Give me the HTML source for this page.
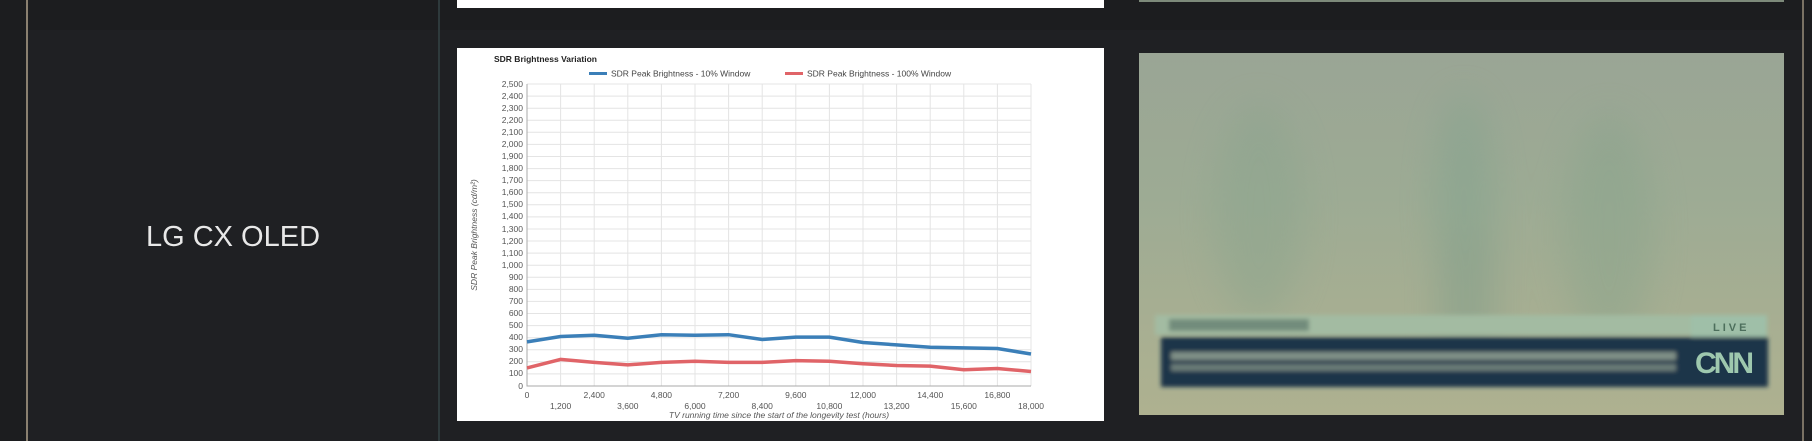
<!DOCTYPE html>
<html><head><meta charset="utf-8"><style>
html,body{margin:0;padding:0;width:1812px;height:441px;overflow:hidden;background:#1c1d1f;font-family:"Liberation Sans",Arial,sans-serif}
.abs{position:absolute}
</style></head><body>
<div class="abs" style="left:28px;top:30px;width:1775px;height:411px;background:#1f2023"></div>
<div class="abs" style="left:26px;top:0;width:2px;height:441px;background:#8a8070"></div>
<div class="abs" style="left:1802px;top:0;width:2px;height:441px;background:#7a7264"></div>
<div class="abs" style="left:438px;top:0;width:2px;height:441px;background:#2e3a3c"></div>
<div class="abs" style="left:1804px;top:0;width:8px;height:441px;background:#1c1d1f"></div>
<div class="abs" style="left:457px;top:0;width:647px;height:8px;background:#fff"></div>
<div class="abs" style="left:1139px;top:0;width:645px;height:2px;background:#7d8a7a"></div>
<div class="abs" style="left:28px;top:220px;width:410px;text-align:center;color:#e8e8e8;font-size:29px;line-height:34px">LG CX OLED</div>
<div class="abs" style="left:457px;top:48px;width:647px;height:373px;background:#fff">
<svg width="647" height="373" viewBox="0 0 647 373" font-family="Liberation Sans,Arial,sans-serif">
<g stroke="#e4e4e4" stroke-width="1">
<path d="M70 36H574M70 48.1H574M70 60.2H574M70 72.2H574M70 84.3H574M70 96.4H574M70 108.5H574M70 120.6H574M70 132.6H574M70 144.7H574M70 156.8H574M70 168.9H574M70 181H574M70 193H574M70 205.1H574M70 217.2H574M70 229.3H574M70 241.4H574M70 253.4H574M70 265.5H574M70 277.6H574M70 289.7H574M70 301.8H574M70 313.8H574M70 325.9H574"/>
<path d="M103.6 36V338M137.2 36V338M170.8 36V338M204.4 36V338M238 36V338M271.6 36V338M305.2 36V338M338.8 36V338M372.4 36V338M406 36V338M439.6 36V338M473.2 36V338M506.8 36V338M540.4 36V338M574 36V338"/>
</g>
<path d="M70 36V338H574" stroke="#aaa" fill="none"/>
<text x="37" y="14" font-size="8.5" font-weight="bold" fill="#222">SDR Brightness Variation</text>
<path d="M132 25.5h18" stroke="#3b7fb8" stroke-width="3"/>
<text x="154" y="28.5" font-size="8.5" fill="#444">SDR Peak Brightness - 10% Window</text>
<path d="M328 25.5h18" stroke="#e06468" stroke-width="3"/>
<text x="350" y="28.5" font-size="8.5" fill="#444">SDR Peak Brightness - 100% Window</text>
<g font-size="8.5" fill="#555" text-anchor="end">
<text x="66" y="39">2,500</text><text x="66" y="51">2,400</text><text x="66" y="63">2,300</text><text x="66" y="75">2,200</text><text x="66" y="87">2,100</text><text x="66" y="99">2,000</text><text x="66" y="111">1,900</text><text x="66" y="123">1,800</text><text x="66" y="135">1,700</text><text x="66" y="147">1,600</text><text x="66" y="159">1,500</text><text x="66" y="171">1,400</text><text x="66" y="184">1,300</text><text x="66" y="196">1,200</text><text x="66" y="208">1,100</text><text x="66" y="220">1,000</text><text x="66" y="232">900</text><text x="66" y="244">800</text><text x="66" y="256">700</text><text x="66" y="268">600</text><text x="66" y="280">500</text><text x="66" y="292">400</text><text x="66" y="304">300</text><text x="66" y="316">200</text><text x="66" y="328">100</text><text x="66" y="341">0</text>
</g>
<g font-size="8.5" fill="#555" text-anchor="middle">
<text x="70" y="350">0</text><text x="137.2" y="350">2,400</text><text x="204.4" y="350">4,800</text><text x="271.6" y="350">7,200</text><text x="338.8" y="350">9,600</text><text x="406" y="350">12,000</text><text x="473.2" y="350">14,400</text><text x="540.4" y="350">16,800</text>
<text x="103.6" y="361">1,200</text><text x="170.8" y="361">3,600</text><text x="238" y="361">6,000</text><text x="305.2" y="361">8,400</text><text x="372.4" y="361">10,800</text><text x="439.6" y="361">13,200</text><text x="506.8" y="361">15,600</text><text x="574" y="361">18,000</text>
<text x="322" y="370" font-style="italic">TV running time since the start of the longevity test (hours)</text>
<text transform="translate(20 187) rotate(-90)" font-style="italic">SDR Peak Brightness (cd/m²)</text>
</g>
<polyline fill="none" stroke="#3b7fb8" stroke-width="3.5" points="70,293.9 103.6,288.5 137.2,287.3 170.8,290.3 204.4,286.7 238,287.3 271.6,286.7 305.2,291.5 338.8,289.1 372.4,289.1 406,294.5 439.6,296.9 473.2,299.3 506.8,299.9 540.4,300.5 574,306"/>
<polyline fill="none" stroke="#e06468" stroke-width="3.5" points="70,319.9 103.6,311.4 137.2,314.4 170.8,316.9 204.4,314.4 238,313.2 271.6,314.4 305.2,314.4 338.8,312.6 372.4,313.2 406,315.7 439.6,317.5 473.2,318.1 506.8,321.7 540.4,320.5 574,323.5"/>
</svg></div>
<div class="abs" style="left:1139px;top:53px;width:645px;height:362px;overflow:hidden;background:linear-gradient(180deg,#9aa595 0%,#9dab94 40%,#a6ae92 70%,#aeb190 100%)">
<svg width="645" height="362">
<defs><filter id="b" x="-50%" y="-50%" width="200%" height="200%"><feGaussianBlur stdDeviation="18"/></filter><filter id="s"><feGaussianBlur stdDeviation="2"/></filter></defs>
<g filter="url(#b)" opacity="0.4">
<ellipse cx="120" cy="160" rx="45" ry="110" fill="#86a38c"/>
<ellipse cx="325" cy="150" rx="30" ry="110" fill="#7aa08c"/>
<rect x="300" y="180" width="55" height="120" fill="#739886"/>
<ellipse cx="470" cy="180" rx="45" ry="120" fill="#84a28a"/>
</g>
<g filter="url(#s)">
<rect x="16" y="262" width="612" height="20" fill="#a3bba2"/>
<rect x="30" y="266" width="140" height="12" fill="#728c7c"/>
<rect x="552" y="262" width="76" height="22" fill="#9fbfa8"/>
<rect x="22" y="284" width="607" height="50" fill="#1f3448"/>
<rect x="32" y="299" width="505" height="8" fill="#7f8f86"/>
<rect x="32" y="311" width="505" height="7" fill="#6a7c78"/>
</g>
<text x="574" y="278" font-size="11" fill="#4d6f5c" letter-spacing="3" font-weight="bold">LIVE</text>
<text x="556" y="320" font-size="30" font-weight="bold" fill="#9ec8ae" letter-spacing="-3">CNN</text>
</svg></div>
</body></html>
